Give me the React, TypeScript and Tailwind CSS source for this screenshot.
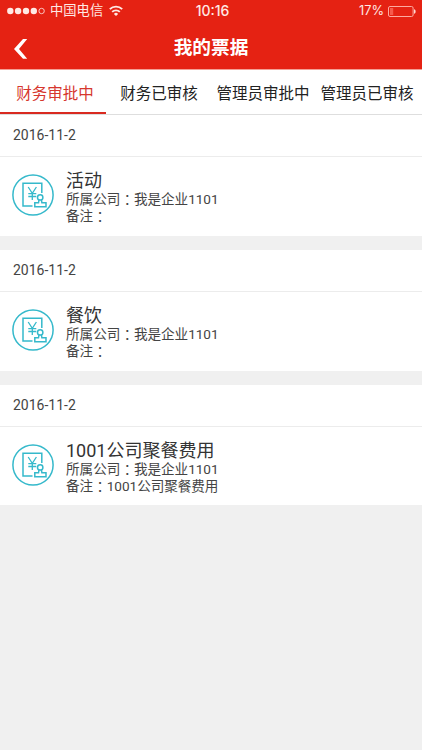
import React from "react";

type Receipt = { date: string; title: string; company: string; note: string; block: string };

const receipts: Receipt[] = [
  { date: "2016-11-2", title: "活动", company: "我是企业1101", note: "", block: "h-[79px]" },
  { date: "2016-11-2", title: "餐饮", company: "我是企业1101", note: "", block: "h-[79px]" },
  { date: "2016-11-2", title: "1001公司聚餐费用", company: "我是企业1101", note: "1001公司聚餐费用", block: "h-[78px]" },
];

const tabs = ["财务审批中", "财务已审核", "管理员审批中", "管理员已审核"];

function ReceiptIcon() {
  return (
    <svg className="block shrink-0" width="42" height="42" viewBox="0 0 42 42" fill="none" stroke="#35b9cb" strokeWidth="1.5">
      <circle cx="21" cy="21" r="20.1" />
      <path d="M20.5 32H11V9.2H29.8V19" />
      <path d="M16.2 13l4.1 6.3 4.1-6.3M20.3 19.3V26M16.3 19.7h8M16.3 22.5h8" strokeWidth="1.3" />
      <circle cx="28.2" cy="23.4" r="2.7" />
      <path d="M27 25.8l-.5 3h-3.7v4h11.2v-4h-4.1l-.5-3" />
    </svg>
  );
}

function Field({ label, value }: { label: string; value: string }) {
  return (
    <div className="flex h-[16.5px] text-[13.6px] leading-[16.5px] text-[#444]">
      <span>{label}</span>
      <span className="block w-[13.6px] font-['Noto_Sans_CJK_TC',sans-serif] leading-[16.5px]" lang="zh-TW">：</span>
      <span className="tracking-[-0.05px]">{value}</span>
    </div>
  );
}

function StatusBar() {
  return (
    <div className="grid h-[22px] grid-cols-3 items-center text-[13px] leading-[20px] text-[#ffe9e4]">
      <div className="flex items-center pl-[7px]">
        <svg width="39" height="8" viewBox="0 0 39 8" fill="currentColor">
          <circle cx="3.3" cy="4" r="3.2" />
          <circle cx="11.1" cy="4" r="3.2" />
          <circle cx="19" cy="4" r="3.2" />
          <circle cx="26.8" cy="4" r="3.2" />
          <circle cx="34.6" cy="4" r="2.7" fill="none" stroke="currentColor" strokeWidth="0.8" />
        </svg>
        <span className="ml-[4px] whitespace-nowrap text-[13.3px]">中国电信</span>
        <svg className="ml-[6px] -mt-px" width="14" height="11" viewBox="0 0 14 11" fill="none" stroke="currentColor" strokeWidth="1.9">
          <path d="M0.8 4.2a8.8 8.8 0 0 1 12.4 0" />
          <path d="M3.2 6.9a5.4 5.4 0 0 1 7.6 0" />
          <path d="M7 11L4.9 8.9a3 3 0 0 1 4.2 0z" fill="currentColor" stroke="none" />
        </svg>
      </div>
      <div className="pl-[3px] text-center font-[Inter,sans-serif] text-[14px] font-medium">10:16</div>
      <div className="flex items-center justify-end pr-[6px]">
        <span className="font-[Inter,sans-serif] text-[12.8px]">17%</span>
        <svg className="ml-[4px]" width="28" height="11" viewBox="0 0 28 11" fill="none">
          <rect x="0.5" y="0.5" width="24.6" height="10" rx="1.5" stroke="#ffb9b0" strokeWidth="0.9" />
          <rect x="2" y="2" width="3.2" height="7" fill="#f75a4c" />
          <path d="M26 3.2c2.2.5 2.2 4.1 0 4.6z" fill="#ffd8d2" />
        </svg>
      </div>
    </div>
  );
}

export default function App() {
  return (
    <div className="flex h-[750px] w-[422px] flex-col overflow-hidden bg-[#f0f0f0] font-[Roboto,'Noto_Sans_CJK_SC',sans-serif] text-[#333]" lang="zh-CN">
      <header className="h-[70px] shrink-0 border-b border-[#f4a095] bg-[#e52213]">
        <StatusBar />
        <div className="grid h-[47px] grid-cols-[60px_1fr_60px] items-center text-white">
          <svg className="ml-[13px] mt-[7px]" width="16" height="22" viewBox="0 0 16 22" fill="white">
            <path d="M10 1H14.2L6 11L14.2 20.7H10L1 11z" />
          </svg>
          <h1 className="mt-[4px] text-center text-[18.7px] font-bold leading-[26px]">我的票据</h1>
        </div>
      </header>
      <nav className="grid h-[45px] shrink-0 grid-cols-[106px_106px_102px_106px] border-b border-[#dedede] bg-white text-[15.5px] text-[#222]">
        {tabs.map((tab, i) => (
          <div
            key={tab}
            className={
              i === 0
                ? "flex items-center justify-center whitespace-nowrap border-b-2 border-[#d92a20] pl-[4px] pt-[7px] text-[#d6372e]"
                : "flex items-center justify-center whitespace-nowrap border-b-2 border-transparent pt-[7px]"
            }
          >
            {tab}
          </div>
        ))}
      </nav>
      <main className="flex flex-col gap-[14px]">
        {receipts.map((r, i) => (
          <section key={i} className="bg-white">
            <div className="flex h-[42px] items-center border-b border-[#ececec] pl-[13px] text-[14px] text-[#444]">{r.date}</div>
            <div className={`${r.block} flex pl-[12px] pt-[17px]`}>
              <ReceiptIcon />
              <div className="-mt-[5px] ml-[12px] whitespace-nowrap">
                <div className="h-[22px] text-[18px] leading-[23px]">{r.title}</div>
                <Field label="所属公司" value={r.company} />
                <Field label="备注" value={r.note} />
              </div>
            </div>
          </section>
        ))}
      </main>
    </div>
  );
}
